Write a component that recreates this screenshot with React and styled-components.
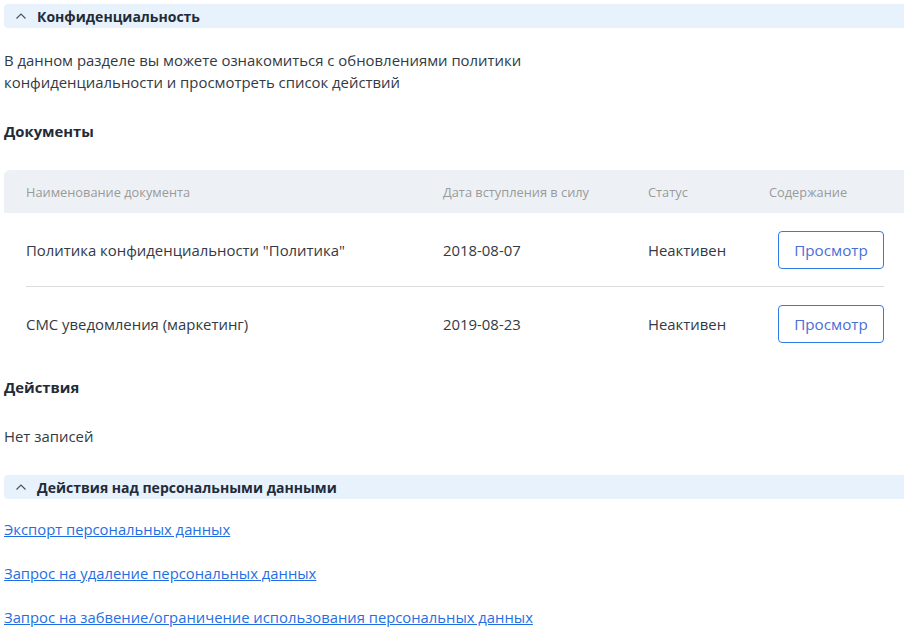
import React from "react";
import styled, { createGlobalStyle } from "styled-components";

const Global = createGlobalStyle`
  html, body { margin: 0; padding: 0; background: #fff; }
  body {
    font-family: "Open Sans", "Noto Sans", sans-serif;
    font-size: 14.9px;
    color: #333a44;
    overflow: hidden;
  }
`;

const Page = styled.div`
  padding: 4px 0 0 4px;
  width: 900px;
`;

const SectionBar = styled.div`
  display: flex;
  align-items: center;
  gap: 10px;
  height: 24px;
  padding-left: 11px;
  background: #e8f2fd;
  border-radius: 4px 0 0 4px;
  font-weight: 700;
  font-size: 14px;
  color: #222b38;
  margin-top: ${(p) => p.$mt || 0}px;
`;

const Chevron = () => (
  <svg width="12" height="8" viewBox="0 0 12 8" fill="none">
    <polyline points="1.5,6.5 6,2 10.5,6.5" stroke="#4a525c" strokeWidth="1.2" />
  </svg>
);

const Paragraph = styled.p`
  margin: ${(p) => p.$mt || 0}px 0 0;
  line-height: 22px;
  font-size: 14.9px;
  color: #333a44;
`;

const Heading = styled.h3`
  margin: ${(p) => p.$mt || 0}px 0 0;
  font-size: 14.8px;
  line-height: 22px;
  font-weight: 700;
  color: #222b38;
`;

const Table = styled.div`
  margin-top: 28px;
  width: 900px;
`;

const cols = "417px 205px 121px 1fr";

const HeadRow = styled.div`
  display: grid;
  grid-template-columns: ${cols};
  align-items: center;
  height: 43px;
  padding: 0 20px 0 22px;
  background: #edf1f5;
  border-radius: 6px 0 0 0;
  font-size: 12.8px;
  color: #9a9a9a;
`;

const Row = styled.div`
  display: grid;
  grid-template-columns: ${cols};
  align-items: center;
  height: 73px;
  margin: 0 20px 0 22px;
  border-bottom: ${(p) => (p.$last ? "none" : "1px solid #dcdcdc")};
  font-size: 14.9px;
  color: #333a44;
`;

const ViewButton = styled.button`
  justify-self: end;
  width: 106px;
  height: 38px;
  border: 1px solid #2f7ce4;
  border-radius: 4px;
  background: #fff;
  color: #4a6ed8;
  font-family: inherit;
  font-size: 15.2px;
  cursor: pointer;
`;

const LinkList = styled.div`
  display: flex;
  flex-direction: column;
  gap: 22px;
  margin-top: 19px;
`;

const Link = styled.a`
  line-height: 22px;
  font-size: 14.8px;
  color: #1f6fe3;
  text-decoration: underline;
  align-self: flex-start;
`;

const docs = [
  { name: 'Политика конфиденциальности "Политика"', date: "2018-08-07", status: "Неактивен" },
  { name: "СМС уведомления (маркетинг)", date: "2019-08-23", status: "Неактивен" },
];

export default function App() {
  return (
    <>
      <Global />
      <Page>
        <SectionBar>
          <Chevron />
          Конфиденциальность
        </SectionBar>
        <Paragraph $mt={21}>
          В данном разделе вы можете ознакомиться с обновлениями политики
          <br />
          конфиденциальности и просмотреть список действий
        </Paragraph>
        <Heading $mt={27}>Документы</Heading>
        <Table>
          <HeadRow>
            <span>Наименование документа</span>
            <span>Дата вступления в силу</span>
            <span>Статус</span>
            <span>Содержание</span>
          </HeadRow>
          {docs.map((d, i) => (
            <Row key={i} $last={i === docs.length - 1}>
              <span>{d.name}</span>
              <span>{d.date}</span>
              <span>{d.status}</span>
              <ViewButton>Просмотр</ViewButton>
            </Row>
          ))}
        </Table>
        <Heading $mt={16}>Действия</Heading>
        <Paragraph $mt={27}>Нет записей</Paragraph>
        <SectionBar $mt={28}>
          <Chevron />
          Действия над персональными данными
        </SectionBar>
        <LinkList>
          <Link href="#">Экспорт персональных данных</Link>
          <Link href="#">Запрос на удаление персональных данных</Link>
          <Link href="#">Запрос на забвение/ограничение использования персональных данных</Link>
        </LinkList>
      </Page>
    </>
  );
}
